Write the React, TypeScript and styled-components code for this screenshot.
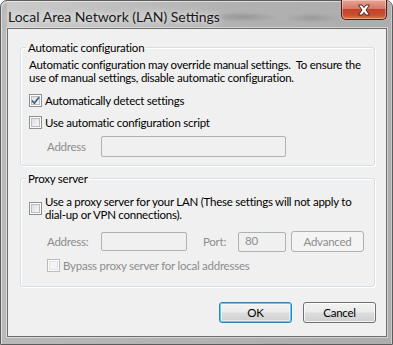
import React from 'react'
import styled, { createGlobalStyle, css } from 'styled-components'

const font = `Lato, "Noto Sans", sans-serif`

const GlobalStyle = createGlobalStyle`
  html, body {
    margin: 0;
    padding: 0;
    background: #ffffff;
  }

  body {
    font-family: ${font};
    font-size: 11.5px;
    letter-spacing: -0.25px;
    color: #000;
  }

  * {
    box-sizing: border-box;
  }
`

const Window = styled.div`
  width: 393px;
  height: 345px;
  display: flex;
  flex-direction: column;
  padding: 0 5px 7px 6px;
  border: 1px solid #5c5c5c;
  border-radius: 7px 7px 0 0;
  background: linear-gradient(90deg, #b9b9b9 0%, #b3b3b3 40%, #adadad 100%);
  box-shadow: inset 1px 1px 0 rgba(255, 255, 255, 0.55), inset -1px 0 0 rgba(255, 255, 255, 0.35);
`

const TitleBar = styled.div`
  height: 27px;
  display: flex;
  justify-content: space-between;
  align-items: flex-start;
  background:
    radial-gradient(ellipse 36px 5px at 235px 16px, rgba(80, 80, 80, 0.28), transparent),
    radial-gradient(ellipse 28px 5px at 305px 17px, rgba(80, 80, 80, 0.22), transparent),
    linear-gradient(90deg, rgba(255, 255, 255, 0.25), rgba(255, 255, 255, 0) 60%);
`

const Title = styled.span`
  margin: 8px 0 0 1px;
  font-size: 14px;
  letter-spacing: 0;
  line-height: 15px;
  color: #1a1a1a;
  text-shadow: 0 0 6px rgba(255, 255, 255, 0.9), 0 0 10px rgba(255, 255, 255, 0.6);
`

const CloseButton = styled.div`
  width: 46px;
  height: 20px;
  margin-top: -1px;
  display: flex;
  align-items: center;
  justify-content: center;
  border: 1px solid #5e1a12;
  border-top: none;
  border-radius: 0 0 5px 5px;
  background: linear-gradient(180deg, #e8a493 0%, #d47a66 45%, #c2432b 50%, #c8502f 80%, #e07a4c 100%);
  box-shadow: inset 0 0 0 1px rgba(255, 255, 255, 0.35);
`

const Client = styled.div`
  flex: 1;
  display: flex;
  flex-direction: column;
  background: #f0f0f0;
  border: 1px solid #6e6e6e;
  box-shadow: 0 0 0 1px rgba(255, 255, 255, 0.45);
`

const Group = styled.fieldset<{ $first?: boolean }>`
  margin: ${p => (p.$first ? '11px' : '5px')} 11px 0 12px;
  padding: 0 0 ${p => (p.$first ? '8px' : '13px')} 8px;
  border: 1px solid #d5dfe5;
  border-radius: 3px;
  box-shadow: inset 1px 1px 0 #ffffff, 1px 1px 0 #ffffff;
  min-width: 0;
`

const Legend = styled.legend`
  margin-left: -3px;
  padding: 0 2px;
  line-height: 15px;
  color: #000;
`

const Description = styled.p`
  margin: 3px 0 0;
  line-height: 13px;
  white-space: nowrap;
`

const CheckRow = styled.label<{ $indent?: number; $height?: number; $disabled?: boolean }>`
  display: flex;
  align-items: center;
  gap: 3px;
  height: ${p => p.$height ?? 22}px;
  margin-left: ${p => p.$indent ?? 0}px;
  line-height: 13px;
  white-space: nowrap;
  color: ${p => (p.$disabled ? '#8d8d8d' : '#000')};
`

const Box = styled.span<{ $disabled?: boolean }>`
  flex: none;
  width: 13px;
  height: 13px;
  display: flex;
  align-items: center;
  justify-content: center;
  border: 1px solid ${p => (p.$disabled ? '#bcbcbc' : '#8e8f8f')};
  background: ${p =>
    p.$disabled
      ? '#f4f4f4'
      : 'linear-gradient(135deg, #d6d8dc 0%, #eeeeee 60%, #fbfbfb 100%)'};
  box-shadow: inset 0 0 0 1px #fdfdfd,
    inset 0 0 0 2px ${p => (p.$disabled ? '#e2e2e2' : '#b9bcc2')};
`

const FieldRow = styled.div<{ $top: number; $indent: number; $height: number }>`
  display: flex;
  align-items: center;
  margin: ${p => p.$top}px 0 0 ${p => p.$indent}px;
  height: ${p => p.$height}px;
`

const FieldLabel = styled.span<{ $width: number; $gap?: number }>`
  width: ${p => p.$width}px;
  margin-left: ${p => p.$gap ?? 0}px;
  color: #8d8d8d;
`

const Input = styled.div<{ $width: number; $height: number }>`
  width: ${p => p.$width}px;
  height: ${p => p.$height}px;
  padding: 0 6px;
  border: 1px solid #adb2b5;
  border-radius: 2px;
  background: #f0f0f0;
  color: #8d8d8d;
  line-height: ${p => p.$height - 4}px;
`

const buttonBase = css`
  width: 73px;
  height: 21px;
  display: flex;
  align-items: center;
  justify-content: center;
  border-radius: 3px;
`

const Button = styled.div<{ $default?: boolean; $disabled?: boolean; $left?: number }>`
  ${buttonBase}
  margin-left: ${p => p.$left ?? 0}px;
  color: ${p => (p.$disabled ? '#8d8d8d' : '#000')};
  border: 1px solid ${p => (p.$disabled ? '#adb2b5' : p.$default ? '#3c7fb1' : '#707070')};
  background: ${p =>
    p.$disabled
      ? '#f4f4f4'
      : 'linear-gradient(180deg, #f2f2f2 0%, #ebebeb 49%, #dddddd 51%, #cfcfcf 100%)'};
  box-shadow: ${p =>
    p.$disabled
      ? 'none'
      : p.$default
      ? 'inset 0 0 0 1px #48d3fb, inset 0 0 0 2px rgba(255,255,255,0.5)'
      : 'inset 0 0 0 1px rgba(255,255,255,0.75)'};
`

const ButtonRow = styled.div`
  display: flex;
  justify-content: flex-end;
  gap: 11px;
  margin: 15px 10px 0 0;
`

const Check = () => (
  <svg width="9" height="9" viewBox="0 0 9 9">
    <path d="M1 4.6 L3.4 7.2 L8 1.2" fill="none" stroke="#4a5f8f" strokeWidth="1.8" />
  </svg>
)

const CloseGlyph = () => (
  <svg width="16" height="12" viewBox="0 0 16 12">
    <path
      d="M2.5 1 L6 1 L8 3.6 L10 1 L13.5 1 L10 6 L13.5 11 L10 11 L8 8.4 L6 11 L2.5 11 L6 6 Z"
      fill="#ffffff"
      stroke="#4a1a12"
      strokeWidth="0.9"
      strokeLinejoin="round"
    />
  </svg>
)

export default function App() {
  return (
    <>
      <GlobalStyle />
      <Window>
        <TitleBar>
          <Title>Local Area Network (LAN) Settings</Title>
          <CloseButton>
            <CloseGlyph />
          </CloseButton>
        </TitleBar>

        <Client>
          <Group $first>
            <Legend>Automatic configuration</Legend>
            <Description>
              Automatic configuration may override manual settings.&nbsp; To ensure the
              <br />
              use of manual settings, disable automatic configuration.
            </Description>
            <CheckRow style={{ marginTop: 5 }}>
              <Box>
                <Check />
              </Box>
              Automatically detect settings
            </CheckRow>
            <CheckRow>
              <Box />
              Use automatic configuration script
            </CheckRow>
            <FieldRow $top={3} $indent={18} $height={21}>
              <FieldLabel $width={54}>Address</FieldLabel>
              <Input $width={185} $height={21} />
            </FieldRow>
          </Group>

          <Group>
            <Legend>Proxy server</Legend>
            <CheckRow $height={26} style={{ marginTop: 9 }}>
              <Box />
              <span>
                Use a proxy server for your LAN (These settings will not apply to
                <br />
                dial-up or VPN connections).
              </span>
            </CheckRow>
            <FieldRow $top={10} $indent={18} $height={21}>
              <FieldLabel $width={54}>Address:</FieldLabel>
              <Input $width={86} $height={19} />
              <FieldLabel $width={35} $gap={16}>
                Port:
              </FieldLabel>
              <Input $width={48} $height={20}>
                80
              </Input>
              <Button $disabled $left={5}>
                Advanced
              </Button>
            </FieldRow>
            <CheckRow $disabled $indent={18} $height={15} style={{ marginTop: 6 }}>
              <Box $disabled />
              Bypass proxy server for local addresses
            </CheckRow>
          </Group>

          <ButtonRow>
            <Button $default>OK</Button>
            <Button>Cancel</Button>
          </ButtonRow>
        </Client>
      </Window>
    </>
  )
}
